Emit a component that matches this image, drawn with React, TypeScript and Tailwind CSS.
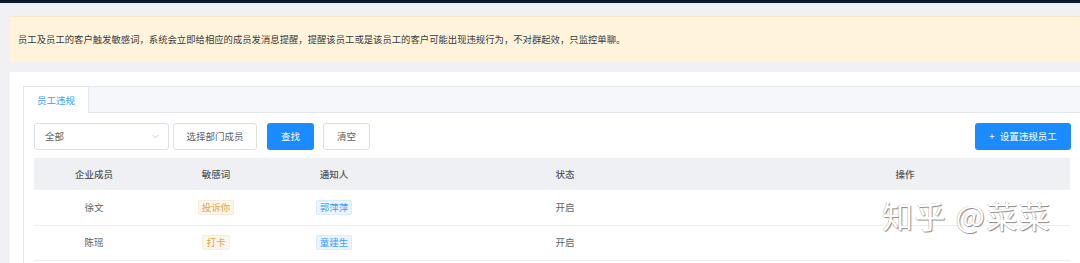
import React from 'react';

const rows = [
  { name: '徐文', word: '投诉你', notify: '郭萍萍', status: '开启' },
  { name: '陈瑶', word: '打卡', notify: '童建生', status: '开启' },
];

export default function App() {
  return (
    <div className="w-[1080px] h-[263px] overflow-hidden bg-[#f1f1f5] font-['Noto_Sans_CJK_SC',sans-serif] text-[9.5px] text-[#606266]">
      <div className="h-[3px] bg-[#0c1a2e]" />
      <div className="h-[2px] bg-[#e8edf8]" />
      <div className="w-[1110px] pl-[10px] pt-[11px]">
        {/* notice */}
        <div className="h-[46px] bg-[#fff3dc] border-t border-[#fbe9cc] flex items-center pl-[8px] text-[9.35px] text-[#3a3a3a]">
          员工及员工的客户触发敏感词，系统会立即给相应的成员发消息提醒，提醒该员工或是该员工的客户可能出现违规行为，不对群起效，只监控单聊。
        </div>

        {/* card */}
        <div className="mt-[10px] bg-white pl-[13px] pt-[14px] h-[200px] relative">
          <div className="border border-[#e4e7ed] h-full">
            <div className="h-[26px] bg-[#f5f7fa] border-b border-[#e4e7ed] flex">
              <div className="w-[65px] h-[26px] bg-white border-r border-[#e4e7ed] flex items-center pl-[13px] text-[#409eff]">
                员工违规
              </div>
            </div>
            <div className="pl-[10px] pt-[10px] w-[1047px]">
              <div className="flex items-center h-[27px]">
                <div className="w-[135px] h-[27px] border border-[#dcdfe6] rounded-[3px] flex items-center justify-between pl-[10px] pr-[8px] text-[#606266]">
                  <span>全部</span>
                  <svg width="9" height="9" viewBox="0 0 10 10" fill="none">
                    <path d="M2 3.5 L5 6.5 L8 3.5" stroke="#c0c4cc" strokeWidth="1" />
                  </svg>
                </div>
                <div className="ml-[4px] w-[84px] h-[27px] border border-[#dcdfe6] rounded-[3px] flex items-center justify-center">
                  选择部门成员
                </div>
                <div className="ml-[10px] w-[47px] h-[27px] bg-[#1a8cff] rounded-[3px] flex items-center justify-center text-white">
                  查找
                </div>
                <div className="ml-[9px] w-[47px] h-[27px] border border-[#dcdfe6] rounded-[3px] flex items-center justify-center">
                  清空
                </div>
                <div className="ml-auto w-[96px] h-[27px] bg-[#1a8cff] rounded-[3px] flex items-center justify-center text-white">
                  <span className="mr-[5px]">+</span>设置违规员工
                </div>
              </div>

              <table className="mt-[8px] w-[1036px] border-collapse table-fixed">
                <thead>
                  <tr className="h-[32px] bg-[#eff0f4] text-[#555]">
                    <th className="w-[120px] font-medium text-center">企业成员</th>
                    <th className="w-[124px] font-medium text-center">敏感词</th>
                    <th className="w-[112px] font-medium text-center">通知人</th>
                    <th className="w-[350px] font-medium text-center">状态</th>
                    <th className="w-[330px] font-medium text-center">操作</th>
                  </tr>
                </thead>
                <tbody>
                  {rows.map((r) => (
                    <tr key={r.name} className="h-[35px] border-b border-[#ebeef5]">
                      <td className="text-center">{r.name}</td>
                      <td className="text-center">
                        <span className="inline-block px-[3px] leading-[13px] border border-[#faecd8] bg-[#fdf6ec] text-[#e6a23c] rounded-[2px]">
                          {r.word}
                        </span>
                      </td>
                      <td className="text-center">
                        <span className="inline-block px-[3px] leading-[13px] border border-[#d9ecff] bg-[#ecf5ff] text-[#409eff] rounded-[2px]">
                          {r.notify}
                        </span>
                      </td>
                      <td className="text-center">{r.status}</td>
                      <td />
                    </tr>
                  ))}
                </tbody>
              </table>
            </div>
          </div>

          {/* watermark */}
          <div className="absolute left-[872px] top-[127px] text-[31px] leading-none tracking-[1.5px] text-white [text-shadow:1px_1px_1px_#8a8a8a,-0.5px_-0.5px_0_#b5b5b5]">
            知乎 @菜菜
          </div>
        </div>
      </div>
    </div>
  );
}
